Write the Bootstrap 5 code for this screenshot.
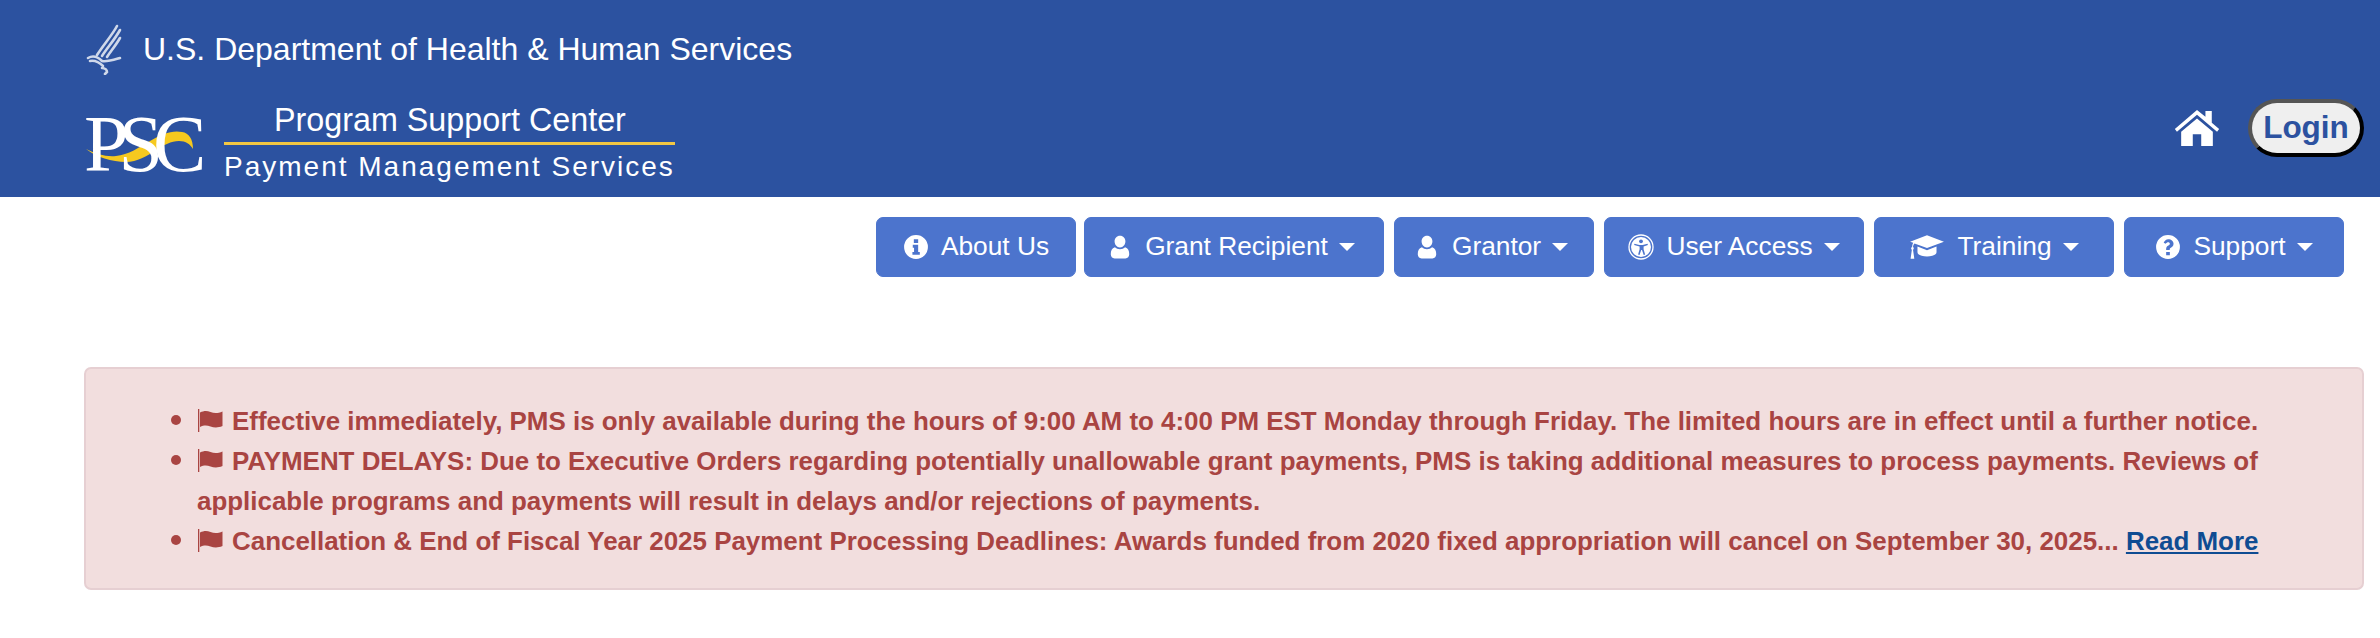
<!DOCTYPE html>
<html lang="en">
<head>
  <meta charset="UTF-8">
  <meta name="viewport" content="width=device-width, initial-scale=1.0">
  <title>Payment Management Services</title>
  <link href="https://cdn.jsdelivr.net/npm/bootstrap@5.3.0/dist/css/bootstrap.min.css" rel="stylesheet">
  <style>
    body {
      font-family: "Liberation Sans", Arial, sans-serif;
      background: #fff;
    }
    .pms-head {
      height: 197px;
      background: #2c52a0;
      color: #fff;
      padding: 0 16px 0 84px;
    }
    .hhs-line {
      height: 99px;
      font-size: 32px;
      padding-bottom: 2px;
    }
    .hhs-eagle { width: 41px; height: 52px; margin-right: 18px; }
    .psc-logo {
      position: relative;
      width: 122px;
      height: 58px;
      margin-right: 18px;
      font-family: "Liberation Serif", serif;
      font-size: 80px;
      line-height: 58px;
      letter-spacing: -10px;
      white-space: nowrap;
    }
    .psc-letters { position: relative; }
    .psc-swoosh { position: absolute; left: 0; top: 0; width: 122px; height: 58px; }
    .psc-name { width: 451px; }
    .psc-top {
      font-size: 32.3px;
      line-height: 43px;
      padding-left: 50px;
      border-bottom: 3px solid #f2c744;
    }
    .psc-bottom {
      font-size: 28px;
      line-height: 43px;
      letter-spacing: 2px;
      white-space: nowrap;
    }
    .head-tools { padding-top: 59px; }
    .home-ico { width: 48px; height: 38px; margin-right: 27px; }
    .login-btn {
      width: 116px;
      height: 58px;
      padding: 0;
      border: 4px outset #555;
      border-radius: 29px;
      background: #efefef;
      color: #2c52a0;
      font-size: 31.5px;
      font-weight: 700;
    }
    .menu-row {
      padding: 20px 36px 0 0;
      gap: 10px;
    }
    .menu-btn {
      --bs-btn-bg: #4c74cd;
      --bs-btn-border-color: #4c74cd;
      --bs-btn-color: #fff;
      --bs-btn-hover-bg: #3f64b8;
      --bs-btn-hover-border-color: #3f64b8;
      --bs-btn-hover-color: #fff;
      --bs-btn-active-bg: #3f64b8;
      --bs-btn-active-border-color: #3f64b8;
      --bs-btn-active-color: #fff;
      height: 60px;
      display: flex;
      align-items: center;
      justify-content: center;
      font-size: 26.3px;
      border-radius: 7px;
      padding: 0;
    }
    .menu-btn svg { width: 26px; height: 26px; margin-right: 12px; flex: none; }
    .menu-btn svg.cap-ico { width: 36px; }
    .menu-btn.dropdown-toggle::after {
      margin-left: 11px;
      border-top-width: 8px;
      border-left-width: 8px;
      border-right-width: 8px;
    }
    .w-about { width: 200px; margin-right: -2px; }
    .w-recipient { width: 300px; padding-right: 6px; }
    .w-grantor { width: 200px; padding-right: 6px; }
    .w-access { width: 260px; }
    .w-training { width: 240px; }
    .w-support { width: 220px; }
    .notice-box {
      --bs-alert-bg: #f2dede;
      --bs-alert-border-color: #e6cfd2;
      --bs-alert-color: #a94442;
      margin: 90px 16px 0 84px;
      height: 223px;
      padding: 32px 90px 0 0;
      border-width: 2px;
      border-radius: 7px;
    }
    .notice-list {
      margin: 0;
      padding-left: 111px;
      font-size: 25.93px;
      font-weight: 700;
      line-height: 40px;
      list-style-image: url("data:image/svg+xml,%3Csvg xmlns='http://www.w3.org/2000/svg' width='19' height='15'%3E%3Ccircle cx='5' cy='5' r='5' fill='%23a94442'/%3E%3C/svg%3E");
    }
    .notice-flag { width: 27px; height: 24px; vertical-align: -3px; margin-right: 8px; }
    .notice-link { color: #0f4c92; }
  </style>
</head>
<body>
  <svg width="0" height="0" class="position-absolute">
    <symbol id="ico-info" viewBox="0 0 24 24"><path fill="currentColor" fill-rule="evenodd" d="M12 1a11 11 0 1 0 0 22 11 11 0 0 0 0-22zm-2 3.800h4v3.400h-4zm-1 5.200h5v6.600h1.500v2.600H8.700v-2.600h1.500v-4H9z"/></symbol>
    <symbol id="ico-user" viewBox="0 0 24 24"><path fill="currentColor" d="M12 1.500c-3 0-5 2.300-5 5.300s2 5.700 5 5.700 5-2.700 5-5.700-2-5.300-5-5.300zM7.300 12.300C4.500 13 3.500 15.500 3.500 18.500c0 2.500 1.300 4 3.500 4h10c2.200 0 3.500-1.500 3.500-4 0-3-1-5.500-3.800-6.200-1.200 1.100-2.900 1.800-4.700 1.800s-3.500-.7-4.700-1.800z"/></symbol>
    <symbol id="ico-access" viewBox="0 0 26 26"><circle cx="13" cy="13" r="12" fill="none" stroke="currentColor" stroke-width="1.300"/><circle cx="13" cy="13" r="10" fill="currentColor"/><g fill="#4c74cd"><circle cx="13" cy="7.300" r="1.900"/><path d="M6.500 9.800l4.800 1.100h3.400l4.800-1.100.4 1.300-4.300 1.400v2.700l1.500 5.400-1.400.5-1.700-5h-.8l-1.700 5-1.400-.5 1.500-5.400v-2.700L6.100 11.100z"/></g></symbol>
    <symbol id="ico-cap" viewBox="0 0 34 24"><path fill="currentColor" d="M17 1 1 7l3 1.100c-.6 1-1 2.300-1.100 3.800-.6.300-.9.800-.9 1.400 0 .6.300 1 .7 1.300L1.500 23H5l-1.200-8.400c.4-.3.700-.7.700-1.300 0-.6-.3-1-.7-1.300.1-1.400.6-2.600 1.400-3.400L17 13l16-6zM8 11.500V17c0 2.200 4 4 9 4s9-1.800 9-4v-5.500L17 15z"/></symbol>
    <symbol id="ico-help" viewBox="0 0 24 24"><path fill="currentColor" fill-rule="evenodd" d="M12 1a11 11 0 1 0 0 22 11 11 0 0 0 0-22zm.200 3.800c2.800 0 4.900 1.700 4.900 4.200 0 2-1.200 2.900-2.400 3.700-.8.500-1.100.8-1.100 1.500v.500h-3.300v-.800c0-1.800.9-2.600 2-3.300.9-.6 1.400-1 1.400-1.700 0-.8-.7-1.300-1.500-1.300-.9 0-1.600.5-2.300 1.400L8 8c1-2 2.300-3.200 4.200-3.200zM10.300 16.500h3.400v3h-3.400z"/></symbol>
    <symbol id="ico-flag" viewBox="0 0 27 24"><path fill="currentColor" d="M1 0h1.300v23H1z"/><path fill="currentColor" d="M3 3.500c4-2 7-2 10.500-.5s7.500 1.500 12-.5v14.500c-4.500 2-8.500 1.700-12 .5s-6.500-1.500-10.500.5z"/></symbol>
  </svg>

  <header class="pms-head d-flex justify-content-between">
    <div>
      <div class="hhs-line d-flex align-items-center">
        <svg class="hhs-eagle" viewBox="0 0 41 52" fill="none" stroke="#cfd8ea" stroke-width="2.600" stroke-linecap="round">
          <path d="M33 3C29 11 20 21 13 32"/>
          <path d="M36 7C31 16 24 24 18 33"/>
          <path d="M36 15C32 22 27 28 23 34"/>
          <path d="M4 35c5-3 10-1 14 3 5 1 11-1 18-3"/>
          <path d="M6 38c6-1 10 2 13 5"/>
          <path d="M18 45c3 0 5 2 5 4l-2 2"/>
        </svg>
        <span>U.S. Department of Health &amp; Human Services</span>
      </div>
      <div class="d-flex align-items-center">
        <div class="psc-logo">
          <svg class="psc-swoosh" viewBox="0 0 122 58"><path fill="#f6c91f" d="M2 34c10 5 20 8 30 7 12-1 24-9 34-15 12-7 22-11 32-9 7 1 11 7 11 17-3-5-7-8-14-8-8 0-15 4-23 9-9 6-19 12-30 12C28 47 12 42 2 34z"/></svg>
          <span class="psc-letters">PSC</span>
        </div>
        <div class="psc-name">
          <div class="psc-top">Program Support Center</div>
          <div class="psc-bottom">Payment Management Services</div>
        </div>
      </div>
    </div>
    <div class="head-tools d-flex align-items-center">
      <svg class="home-ico" viewBox="0 0 44 36"><path fill="#fff" d="M22 1 1 19l2 2.600L22 5.500l19 16.100 2-2.600-7-6V2h-6v5.400zM22 9 7 21.500V35h11V24h8v11h11V21.500z"/></svg>
      <button class="login-btn" type="button">Login</button>
    </div>
  </header>

  <nav class="menu-row d-flex justify-content-end">
    <button class="btn menu-btn w-about" type="button"><svg><use href="#ico-info"/></svg>About Us</button>
    <button class="btn menu-btn dropdown-toggle w-recipient" type="button"><svg><use href="#ico-user"/></svg>Grant Recipient</button>
    <button class="btn menu-btn dropdown-toggle w-grantor" type="button"><svg><use href="#ico-user"/></svg>Grantor</button>
    <button class="btn menu-btn dropdown-toggle w-access" type="button"><svg><use href="#ico-access"/></svg>User Access</button>
    <button class="btn menu-btn dropdown-toggle w-training" type="button"><svg class="cap-ico"><use href="#ico-cap"/></svg>Training</button>
    <button class="btn menu-btn dropdown-toggle w-support" type="button"><svg><use href="#ico-help"/></svg>Support</button>
  </nav>

  <div class="alert notice-box">
    <ul class="notice-list">
      <li><svg class="notice-flag"><use href="#ico-flag"/></svg>Effective immediately, PMS is only available during the hours of 9:00 AM to 4:00 PM EST Monday through Friday. The limited hours are in effect until a further notice.</li>
      <li><svg class="notice-flag"><use href="#ico-flag"/></svg>PAYMENT DELAYS: Due to Executive Orders regarding potentially unallowable grant payments, PMS is taking additional measures to process payments. Reviews of applicable programs and payments will result in delays and/or rejections of payments.</li>
      <li><svg class="notice-flag"><use href="#ico-flag"/></svg>Cancellation &amp; End of Fiscal Year 2025 Payment Processing Deadlines: Awards funded from 2020 fixed appropriation will cancel on September 30, 2025... <a class="notice-link" href="#">Read More</a></li>
    </ul>
  </div>

  <script src="https://cdn.jsdelivr.net/npm/bootstrap@5.3.0/dist/js/bootstrap.bundle.min.js"></script>
</body>
</html>
